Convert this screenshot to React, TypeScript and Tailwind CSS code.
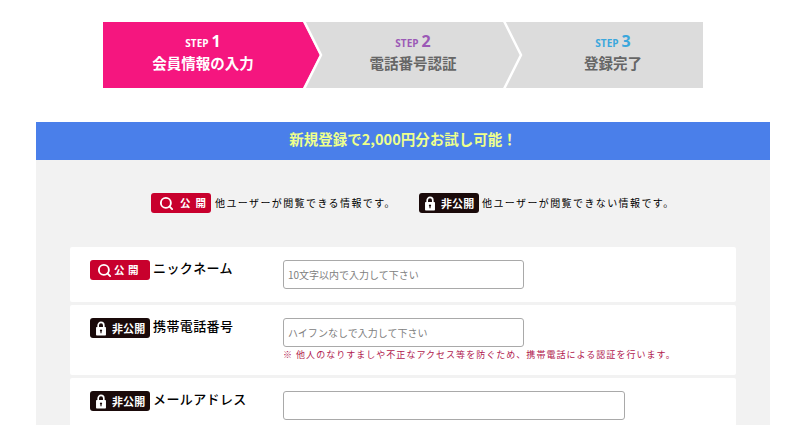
import { Search } from "lucide-react";

const jp = "font-['Noto_Sans_CJK_JP','Noto_Sans',sans-serif]";

function LockIcon() {
  return (
    <svg viewBox="0 0 12 16" className="h-[15px] w-[12px] shrink-0">
      <path d="M3 7V4.5a3 3 0 0 1 6 0V7" fill="none" stroke="#ffffff" strokeWidth="1.8" />
      <path
        fillRule="evenodd"
        d="M1.5 6.5h9a.8.8 0 0 1 .8.8v7.4a.8.8 0 0 1-.8.8h-9a.8.8 0 0 1-.8-.8V7.300a.8.8 0 0 1 .8-.8ZM6 9a1.200 1.200 0 0 0-.6 2.240V13h1.200v-1.760A1.200 1.200 0 0 0 6 9Z"
        fill="#ffffff"
      />
    </svg>
  );
}

function PublicBadge({ wide }: { wide?: boolean }) {
  return (
    <span
      className={`flex h-5 w-[60px] shrink-0 items-center rounded-[3px] bg-[#c8002d] text-[10.5px] font-bold text-white ${
        wide ? "pl-2 tracking-[5px]" : "pl-[7px] tracking-[3.5px]"
      }`}
    >
      <Search size={15} strokeWidth={3} className="shrink-0" />
      <span className={wide ? "ml-[6px] whitespace-nowrap leading-none" : "ml-[2px] whitespace-nowrap leading-none"}>
        公開
      </span>
    </span>
  );
}

function PrivateBadge() {
  return (
    <span className="flex h-5 w-[60px] shrink-0 items-center rounded-[3px] bg-[#1a0a0a] pl-[5px] text-[11px] font-bold leading-none tracking-[0.01em] text-white">
      <LockIcon />
      <span className="ml-[5px]">非公開</span>
    </span>
  );
}

function Step({
  no,
  label,
  stepColor,
  active,
  arrow,
}: {
  no: number;
  label: string;
  stepColor: string;
  active?: boolean;
  arrow?: boolean;
}) {
  return (
    <div
      className={`relative flex h-[66px] w-[200px] flex-col items-center pt-[9px] ${
        active ? "bg-[#f5167f]" : "bg-[#dcdcdc] pl-5"
      }`}
    >
      <div className={`flex h-5 items-baseline font-['Open_Sans',sans-serif] font-bold leading-5 ${stepColor}`}>
        <span className="text-[10px]">STEP</span>
        <span className="ml-[3px] text-[16px]">{no}</span>
      </div>
      <div className={`text-[14.5px] font-bold leading-6 ${active ? "text-white" : "text-[#666666]"}`}>
        {label}
      </div>
      {arrow && (
        <svg viewBox="0 0 20 66" className="absolute left-full top-0 z-10 h-[66px] w-5">
          <path d="M0 0 L17 33 L0 66 Z" fill={active ? "#f5167f" : "#dcdcdc"} />
          <path d="M1 -1 L18 33 L1 67" fill="none" stroke="#ffffff" strokeWidth="2.5" />
        </svg>
      )}
    </div>
  );
}

function Row({
  badge,
  label,
  height,
  children,
}: {
  badge: React.ReactNode;
  label: string;
  height: string;
  children: React.ReactNode;
}) {
  return (
    <div className={`flex rounded-[2px] bg-white pl-5 pt-[13px] ${height}`}>
      <div className="flex h-5 w-[193px] shrink-0 items-center gap-[3px]">
        {badge}
        <span className="pb-1 text-[13px] font-medium leading-5 tracking-[0.03em] text-black">{label}</span>
      </div>
      <div className="flex flex-col">{children}</div>
    </div>
  );
}

function TextInput({ width, placeholder }: { width: string; placeholder?: string }) {
  return (
    <input
      readOnly
      placeholder={placeholder}
      className={`h-[29px] rounded-[3px] border border-[#a9a9a9] bg-white px-1 text-[10px] placeholder:text-[#808080] ${width}`}
    />
  );
}

export default function App() {
  return (
    <div className={`h-[425px] w-[800px] overflow-hidden bg-white ${jp}`}>
      {/* Steps */}
      <div className="flex justify-center pt-[22px]">
        <div className="ml-[6px] flex">
          <Step no={1} label="会員情報の入力" stepColor="text-white" active arrow />
          <Step no={2} label="電話番号認証" stepColor="text-[#9b59b6]" arrow />
          <Step no={3} label="登録完了" stepColor="text-[#3ba7dc]" />
        </div>
      </div>

      <div className="mx-[36px] mt-[34px] w-[734px]">
        <div className="flex h-[38px] items-center justify-center bg-[#4a7fea] pb-1 text-[14.5px] font-bold text-[#eeff8c]">
          新規登録で2,000円分お試し可能！
        </div>

        <div className="h-[300px] bg-[#f2f2f2] px-[34px]">
          {/* Legend */}
          <div className="flex h-[87px] items-center pb-[1px] pl-[81px] text-[10px] tracking-[0.14em] text-black">
            <PublicBadge wide />
            <span className="mb-[2px] ml-1 w-[204px] tracking-[0.14em]">他ユーザーが閲覧できる情報です。</span>
            <PrivateBadge />
            <span className="mb-[2px] ml-[3px] tracking-[0.14em]">他ユーザーが閲覧できない情報です。</span>
          </div>

          {/* Form rows */}
          <div className="flex flex-col gap-[3px]">
            <Row badge={<PublicBadge />} label="ニックネーム" height="h-[55px]">
              <TextInput width="w-[241px]" placeholder="10文字以内で入力して下さい" />
            </Row>
            <Row badge={<PrivateBadge />} label="携帯電話番号" height="h-[70px]">
              <TextInput width="w-[241px]" placeholder="ハイフンなしで入力して下さい" />
              <p className="mt-[2px] text-[9px] leading-3 tracking-[0.115em] text-[#b0184e]">
                ※ 他人のなりすましや不正なアクセス等を防ぐため、携帯電話による認証を行います。
              </p>
            </Row>
            <Row badge={<PrivateBadge />} label="メールアドレス" height="h-[70px]">
              <TextInput width="w-[342px]" />
            </Row>
          </div>
        </div>
      </div>
    </div>
  );
}
